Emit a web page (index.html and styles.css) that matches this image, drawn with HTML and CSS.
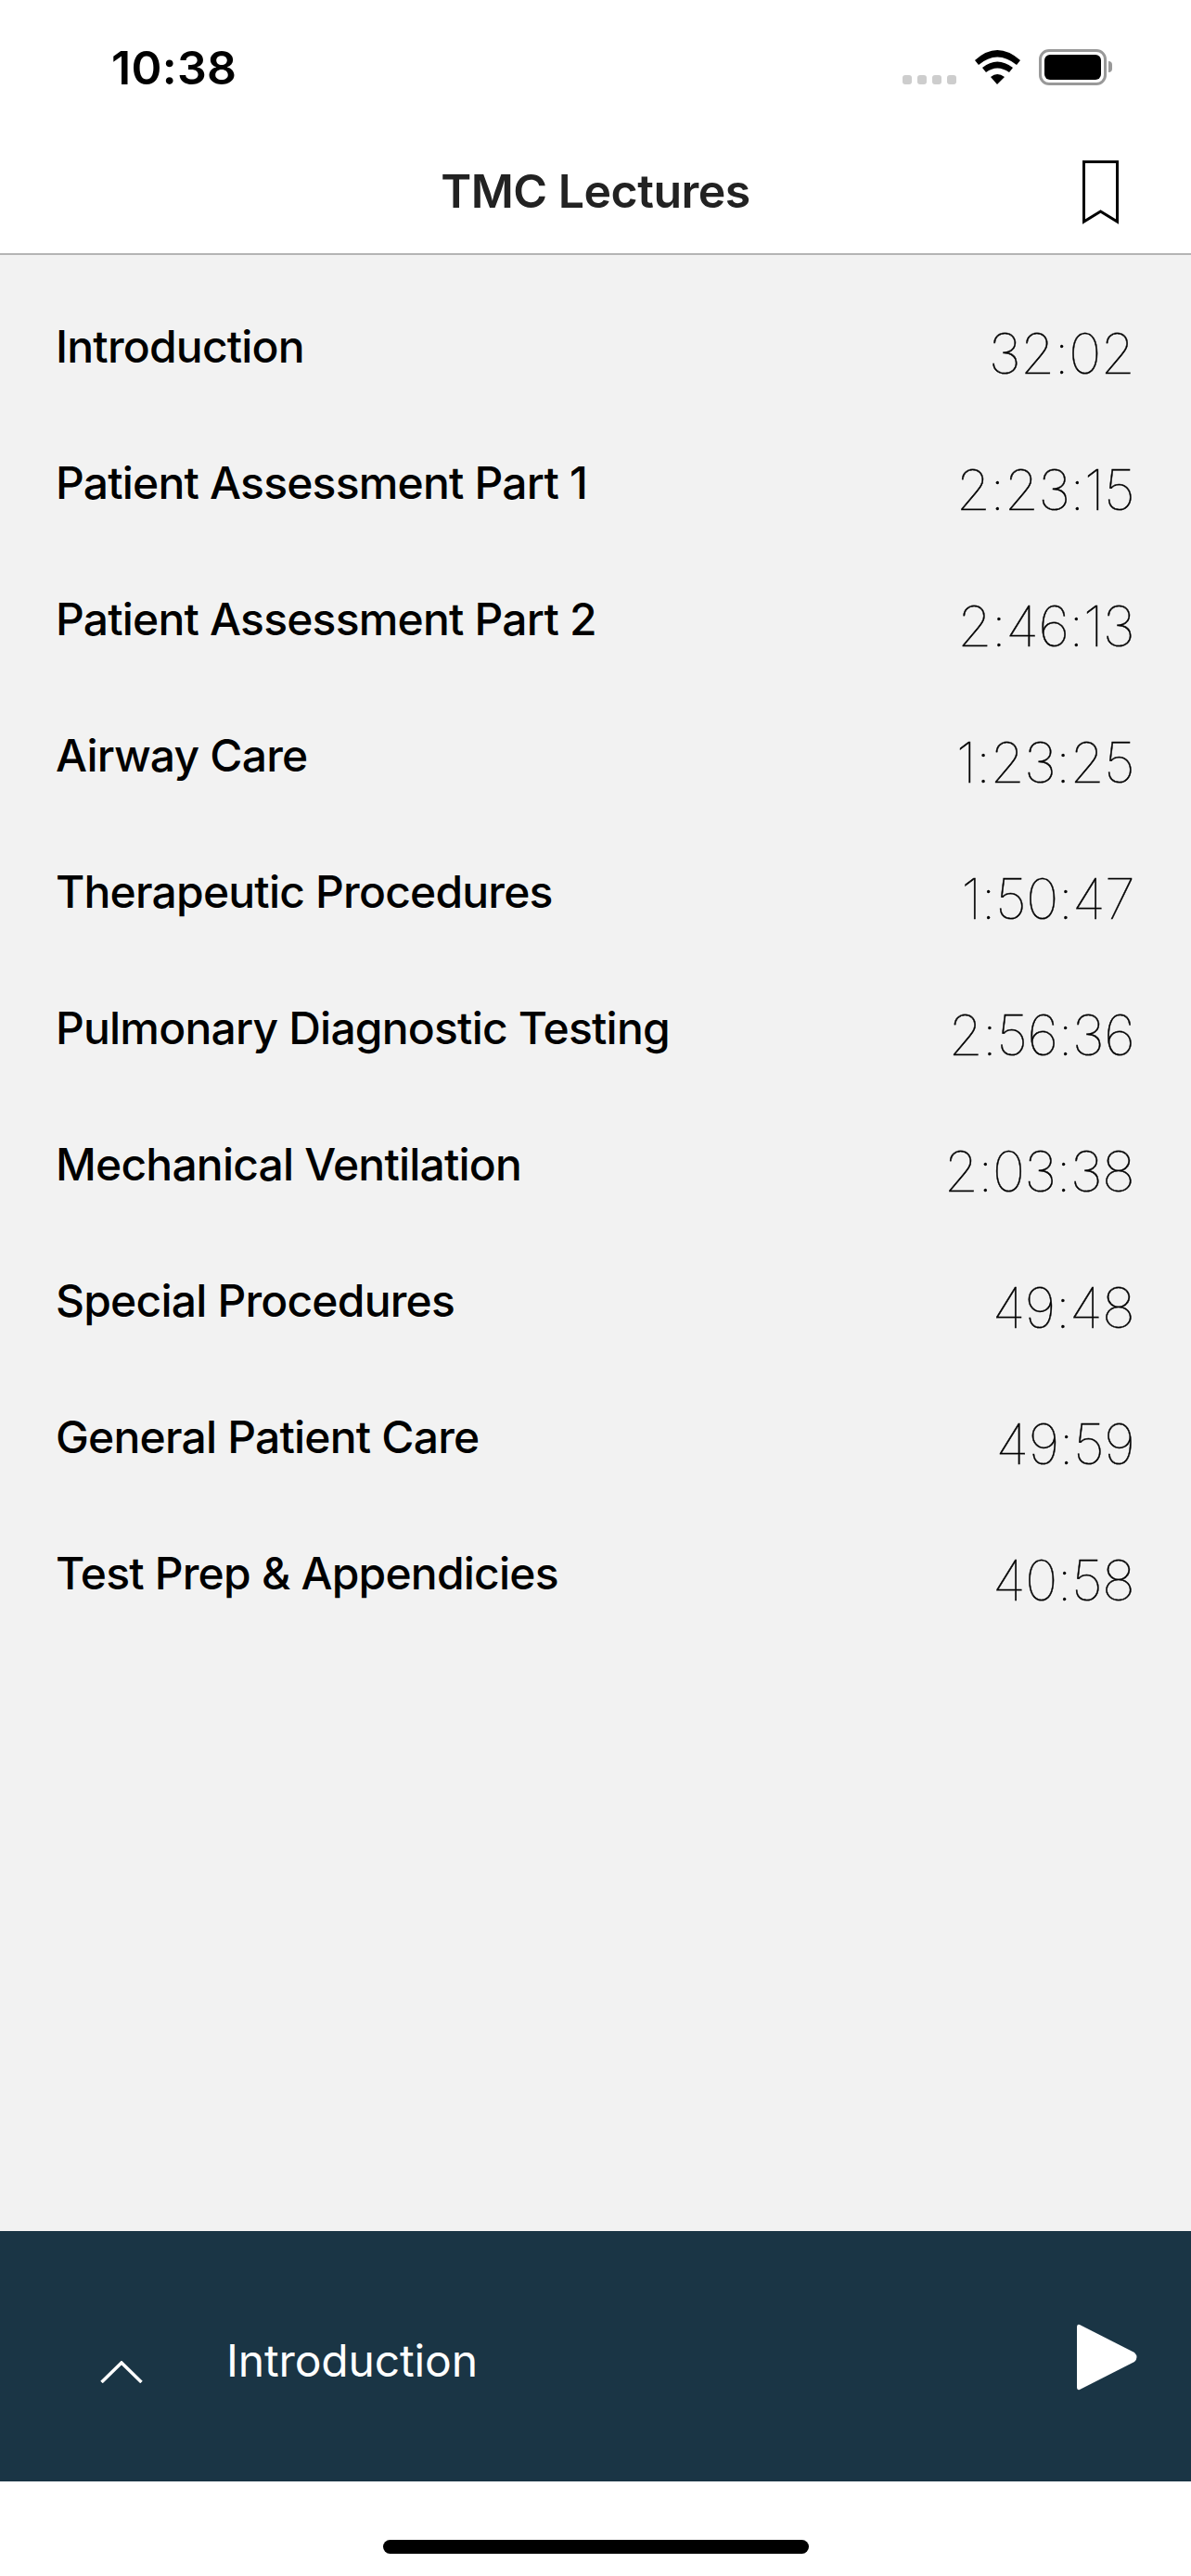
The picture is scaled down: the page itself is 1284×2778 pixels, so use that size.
FILE: index.html
```html
<!DOCTYPE html>
<html lang="en">
<head>
  <meta charset="UTF-8">
  <meta name="viewport" content="width=device-width, initial-scale=1.0">
  <title>TMC Lectures</title>
  <link rel="stylesheet" href="styles.css">
</head>
<body>
  <div class="status-bar">
    <span class="clock">10:38</span>
    <div class="status-icons">
      <div class="signal"><i></i><i></i><i></i><i></i></div>
      <svg class="wifi" width="51" height="37" viewBox="0 0 51 37">
        <path d="M1 11Q25 -11 50 11L46 16Q25 -1 5 16Z"/>
        <path d="M9 19Q25 6 42 19L38 24Q25 15 13 24Z"/>
        <path d="M18 29Q25 23 33 29L25 37Z"/>
      </svg>
      <div class="battery"><div class="battery-fill"></div></div>
      <div class="battery-cap"></div>
    </div>
  </div>

  <div class="nav-bar">
    <h1>TMC Lectures</h1>
    <svg class="bookmark" width="39" height="69" viewBox="0 0 39 69">
      <path d="M1.5 1.5H37.5V66L19.5 55L1.5 66Z"/>
    </svg>
  </div>

  <!-- Lecture list -->
  <ul class="lectures">
    <li><span class="name">Introduction</span><span class="time">32:02</span></li>
    <li><span class="name">Patient Assessment Part 1</span><span class="time">2:23:15</span></li>
    <li><span class="name">Patient Assessment Part 2</span><span class="time">2:46:13</span></li>
    <li><span class="name">Airway Care</span><span class="time">1:23:25</span></li>
    <li><span class="name">Therapeutic Procedures</span><span class="time">1:50:47</span></li>
    <li><span class="name">Pulmonary Diagnostic Testing</span><span class="time">2:56:36</span></li>
    <li><span class="name">Mechanical Ventilation</span><span class="time">2:03:38</span></li>
    <li><span class="name">Special Procedures</span><span class="time">49:48</span></li>
    <li><span class="name">General Patient Care</span><span class="time">49:59</span></li>
    <li><span class="name">Test Prep &amp; Appendicies</span><span class="time">40:58</span></li>
  </ul>

  <!-- Mini player -->
  <div class="player">
    <svg class="chevron" width="46" height="24" viewBox="0 0 46 24">
      <path d="M1.5 23L23 2L44.5 23"/>
    </svg>
    <span class="player-title">Introduction</span>
    <svg class="play" width="67" height="74" viewBox="0 0 67 74">
      <path d="M4 2L63 32Q68 37 63 42L4 72Q1 73 1 69V5Q1 1 4 2Z"/>
    </svg>
  </div>

  <div class="home-area"><div class="home-indicator"></div></div>
</body>
</html>
```

FILE: styles.css
```css
* {
  box-sizing: border-box;
}
html, body {
  height: 100%;
}
body {
  margin: 0;
  display: flex;
  flex-direction: column;
  background-color: #fff;
  font-family: Inter, "Liberation Sans", sans-serif;
  color: #000;
}
.status-bar {
  height: 135px;
  flex: none;
  display: flex;
  justify-content: space-between;
  padding: 44px 85px 0 120px;
}
.clock {
  font-size: 50px;
  font-weight: 600;
  line-height: 58px;
  letter-spacing: 0.3px;
}
.status-icons {
  display: flex;
  align-items: flex-start;
  padding-top: 9px;
}
.signal {
  display: flex;
  gap: 6px;
  margin-top: 28px;
  margin-right: 19px;
}
.signal i {
  width: 10px;
  height: 10px;
  border-radius: 3px;
  background-color: #cdcdcd;
}
.wifi {
  margin-top: 1px;
  margin-right: 19px;
}
.battery {
  width: 73px;
  height: 39px;
  padding: 3px;
  border: 3px solid #999;
  border-radius: 11px;
}
.battery-fill {
  height: 100%;
  background-color: #000;
  border-radius: 6px;
}
.battery-cap {
  width: 4px;
  height: 12px;
  margin-top: 13px;
  margin-left: 2px;
  background-color: #999;
  border-radius: 0 4px 4px 0;
}
.nav-bar {
  height: 140px;
  flex: none;
  display: flex;
  align-items: center;
  justify-content: center;
  position: relative;
  border-bottom: 2px solid #b4b4b4;
}
.nav-bar h1 {
  margin: 0;
  padding-top: 4px;
  font-size: 50px;
  font-weight: 600;
  color: #222;
  letter-spacing: -0.5px;
}
.bookmark {
  position: absolute;
  left: 1167px;
  top: 38px;
}
.bookmark path {
  fill: none;
  stroke: #000;
  stroke-width: 3;
}
.lectures {
  flex: 1;
  margin: 0;
  padding: 69px 61px 0 60px;
  list-style: none;
  background-color: #f2f2f2;
}
.lectures li {
  height: 147px;
  display: flex;
  justify-content: space-between;
  align-items: flex-start;
}
.name {
  font-size: 48px;
  font-weight: 500;
  line-height: 60px;
  letter-spacing: -0.8px;
}
.time {
  padding-top: 1px;
  font-size: 60px;
  font-weight: 100;
  line-height: 72px;
  letter-spacing: -0.8px;
  color: #000;
  -webkit-text-stroke: 0.4px #000;
}
.player {
  height: 270px;
  flex: none;
  display: flex;
  align-items: center;
  position: relative;
  padding-left: 108px;
  background-color: #1a3545;
}
.chevron {
  margin-top: 34px;
}
.chevron path {
  fill: none;
  stroke: #fff;
  stroke-width: 3.5;
}
.player-title {
  margin-left: 90px;
  padding-top: 8px;
  font-size: 48px;
  font-weight: 400;
  letter-spacing: -0.15px;
  color: #fff;
}
.play {
  position: absolute;
  left: 1160px;
  top: 99px;
}
.play path {
  fill: #fff;
}
.home-area {
  height: 102px;
  flex: none;
  padding: 63px 0 0 413px;
}
.home-indicator {
  width: 459px;
  height: 15px;
  background-color: #000;
  border-radius: 8px;
}
```
